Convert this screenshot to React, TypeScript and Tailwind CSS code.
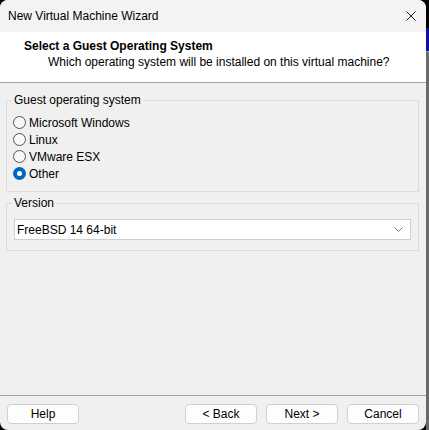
import { useState } from 'react';

const font = { fontFamily: '"Liberation Sans", Arial, sans-serif' };

const options = ['Microsoft Windows', 'Linux', 'VMware ESX', 'Other'];

function Radio({ checked }: { checked: boolean }) {
  return checked ? (
    <span className="flex h-[13px] w-[13px] shrink-0 items-center justify-center rounded-full bg-[#0067c0]">
      <span className="h-[5px] w-[5px] rounded-full bg-white" />
    </span>
  ) : (
    <span className="h-[13px] w-[13px] shrink-0 rounded-full border border-[#555] bg-[#f7f7f7]" />
  );
}

function IconClose() {
  return (
    <svg width="10" height="10" viewBox="0 0 10 10" fill="none" stroke="#1a1a1a" strokeWidth={1}>
      <path d="M0.5 0.5l9 9M9.5 0.5l-9 9" />
    </svg>
  );
}

function IconChevron() {
  return (
    <svg width="9" height="5" viewBox="0 0 9 5" fill="none" stroke="#7a7a7a" strokeWidth={1}>
      <path d="M0.5 0.5l4 4 4-4" />
    </svg>
  );
}

const btn =
  'h-[20px] w-[72px] rounded-[4px] border border-[#d0d0d0] bg-[#fdfdfd] text-[12px] text-black';

export default function App() {
  const [selected, setSelected] = useState(3);

  return (
    <div className="flex h-[430px] w-[429px] bg-black" style={font}>
      <div className="flex h-full w-[426px] flex-col overflow-hidden rounded-[8px] bg-[#f0f0f0] text-[12px] leading-[16px] text-black">
        <div className="flex h-[32px] shrink-0 items-center justify-between bg-[#f3f3f3] pl-[8px] pr-[10px]">
          <span>New Virtual Machine Wizard</span>
          <IconClose />
        </div>

        <div className="shrink-0 border-b border-[#a0a0a0] bg-white pb-[12px] pt-[6px]">
          <div className="pl-[24px] font-bold">Select a Guest Operating System</div>
          <div className="pl-[48px]">Which operating system will be installed on this virtual machine?</div>
        </div>

        <div className="flex flex-col pl-[6px] pr-[7px] pt-[9px]">
          <fieldset className="border border-[#dcdcdc] pb-[9px]">
            <legend className="ml-[5px] px-[2px]">Guest operating system</legend>
            <div className="flex flex-col pl-[6px] pt-[6px]">
              {options.map((o, i) => (
                <label
                  key={o}
                  className="flex h-[17px] cursor-default items-center gap-[3px]"
                  onClick={() => setSelected(i)}
                >
                  <Radio checked={selected === i} />
                  <span>{o}</span>
                </label>
              ))}
            </div>
          </fieldset>

          <fieldset className="mt-[3px] border border-[#dcdcdc] pb-[10px]">
            <legend className="ml-[5px] px-[2px]">Version</legend>
            <div className="mx-[7px] mt-[8px] flex h-[21px] items-center justify-between border border-[#cfcfcf] bg-white pl-[2px] pr-[7px]">
              <span>FreeBSD 14 64-bit</span>
              <IconChevron />
            </div>
          </fieldset>
        </div>

        <div className="flex-1" />

        <div className="shrink-0 border-t border-[#a0a0a0] px-[7px] pb-[6px] pt-[8px]">
          <div className="flex items-center">
            <button className={btn}>Help</button>
            <div className="flex-1" />
            <div className="flex gap-[9px]">
              <button className={btn}>&lt; Back</button>
              <button className={`${btn} border-[#0067c0]`}>Next &gt;</button>
              <button className={btn}>Cancel</button>
            </div>
          </div>
        </div>
      </div>

      <div className="flex w-[3px] flex-col">
        <div className="h-[28px] bg-black" />
        <div className="h-[24px] border-b border-[#6fa8ff] bg-[#10109c]" />
        <div className="flex-1 bg-[#6a6a6a]" />
      </div>
    </div>
  );
}
